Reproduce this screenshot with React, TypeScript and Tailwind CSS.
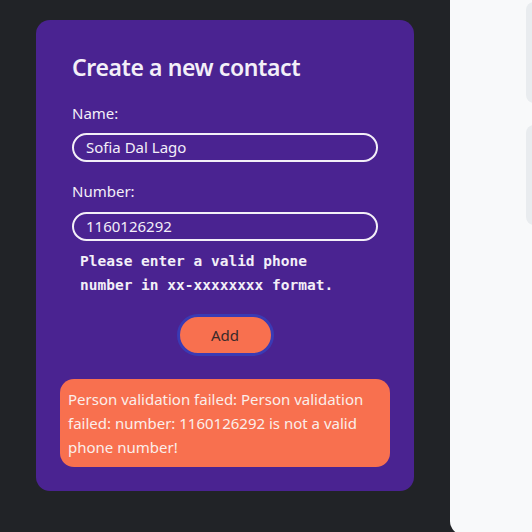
import React from "react";

export default function App() {
  const sans = { fontFamily: '"Noto Sans", "Open Sans", sans-serif' };
  return (
    <div
      className="w-[532px] h-[532px] overflow-hidden bg-[#212327] flex"
      style={sans}
    >
      <div className="w-[450px] shrink-0 pl-[36px] pt-[20px]">
        <div className="w-[378px] rounded-[14px] bg-[#4a2391] px-[36px] pt-[31px] pb-[24px] text-[#f3eff8]">
          <h2 className="text-[23px] leading-[32px] font-semibold tracking-[-0.4px]">Create a new contact</h2>
          <div className="mt-[19px] text-[15px] leading-[22px]">Name:</div>
          <div className="mt-[9px] h-[29px] w-[306px] rounded-full border-2 border-[#f3eff8] px-[12px] flex items-center text-[15px]">
            Sofia Dal Lago
          </div>
          <div className="mt-[18px] text-[15px] leading-[22px]">Number:</div>
          <div className="mt-[10px] h-[29px] w-[306px] rounded-full border-2 border-[#f3eff8] px-[12px] flex items-center text-[15px]">
            1160126292
          </div>
          <p
            className="mt-[8px] pl-[8px] text-[14.5px] leading-[24px] font-bold"
            style={{ fontFamily: '"DejaVu Sans Mono", "Liberation Mono", monospace' }}
          >
            Please enter a valid phone
            <br />
            number in xx-xxxxxxxx format.
          </p>
          <div className="mt-[17px] flex justify-center">
            <button className="h-[42px] w-[97px] rounded-full border-[3px] border-[#3a3ab4] bg-[#f8704f] text-[15px] text-[#3a2a2a]">
              Add
            </button>
          </div>
          <div className="mt-[23px] -mx-[12px] rounded-[14px] bg-[#f8704f] px-[8px] py-[8px] text-[15px] leading-[24px] text-[#fbeeea]">
            Person validation failed: Person validation failed: number: 1160126292 is not a valid phone number!
          </div>
        </div>
      </div>
      <div className="flex-1 h-[535px] bg-[#f8f9fa] rounded-bl-[14px] pl-[76px] pt-[2px] flex flex-col gap-[22px]">
        <div className="h-[101px] w-[60px] rounded-[8px] bg-[#e9ecef]" />
        <div className="h-[100px] w-[60px] rounded-[8px] bg-[#e9ecef]" />
      </div>
    </div>
  );
}
